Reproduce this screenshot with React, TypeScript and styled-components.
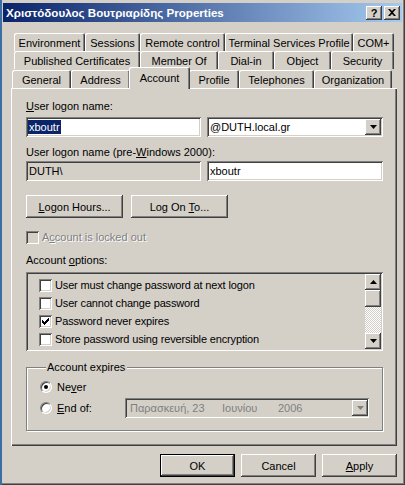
import React from 'react';
import styled, { createGlobalStyle, css } from 'styled-components';

const face = '#d4d0c8';
const shadow = '#808080';
const dark = '#404040';

const raised = css`
  box-shadow: inset -1px -1px ${dark}, inset 1px 1px #fff, inset -2px -2px ${shadow}, inset 2px 2px ${face};
`;

const sunken = css`
  box-shadow: inset 1px 1px ${shadow}, inset -1px -1px #fff, inset 2px 2px ${dark}, inset -2px -2px ${face};
`;

const GlobalStyle = createGlobalStyle`
  body {
    margin: 0;
    background: ${face};
    font-family: "Liberation Sans", Arial, sans-serif;
    font-size: 11px;
    color: #000;
  }
  * { box-sizing: border-box; }
`;

const Window = styled.div`
  width: 405px;
  height: 485px;
  display: flex;
  flex-direction: column;
  background: ${face};
  border-left: 2px solid #3a6ea5;
  padding: 3px 3px 0 1px;
  box-shadow: inset -1px -1px ${dark}, inset -2px -2px ${shadow}, inset 1px 1px ${face};
`;

const TitleBar = styled.div`
  height: 19px;
  display: flex;
  align-items: center;
  padding: 0 2px 0 3px;
  background: linear-gradient(to right, #0a246a, #a6caf0);
  color: #fff;
  font-weight: bold;
  font-size: 11.6px;
  white-space: nowrap;
`;

const TitleButtons = styled.div`
  margin-left: auto;
  display: flex;
  gap: 2px;
`;

const TitleButton = styled.div`
  width: 16px;
  height: 14px;
  display: flex;
  align-items: center;
  justify-content: center;
  background: ${face};
  color: #000;
  font-size: 11px;
  font-weight: bold;
  ${raised}
`;

const Body = styled.div`
  flex: 1;
  display: flex;
  flex-direction: column;
  padding: 11px 5px 0 8px;
`;

const TabRow = styled.div<{ $indent: number; $h: number }>`
  display: flex;
  align-items: flex-end;
  height: ${(p) => p.$h}px;
  padding-left: ${(p) => p.$indent}px;
`;

const Tab = styled.div<{ $w: number; $active?: boolean }>`
  position: relative;
  width: ${(p) => p.$w}px;
  height: ${(p) => (p.$active ? 22 : 18)}px;
  margin: ${(p) => (p.$active ? '0 -1px -1px -1px' : '0')};
  z-index: ${(p) => (p.$active ? 1 : 0)};
  display: flex;
  align-items: center;
  justify-content: center;
  padding-top: ${(p) => (p.$active ? 0 : 2)}px;
  background: ${face};
  border-radius: 2px 2px 0 0;
  box-shadow: inset 1px 1px #fff, inset -1px 0 ${dark}, inset -2px 0 ${shadow};
  white-space: nowrap;
`;

const Panel = styled.div`
  height: 358px;
  display: flex;
  flex-direction: column;
  padding: 12px 14px 0 15px;
  box-shadow: inset 1px 1px #fff, inset -1px -1px ${dark}, inset -2px -2px ${shadow};
`;

const Label = styled.div<{ $gap?: number; $disabled?: boolean }>`
  height: 13px;
  line-height: 13px;
  margin-top: ${(p) => p.$gap ?? 0}px;
  white-space: nowrap;
  color: ${(p) => (p.$disabled ? shadow : '#000')};
  text-shadow: ${(p) => (p.$disabled ? '1px 1px #fff' : 'none')};
`;

const FieldRow = styled.div<{ $gap: number }>`
  display: flex;
  gap: 6px;
  margin-top: ${(p) => p.$gap}px;
`;

const TextBox = styled.div<{ $w: number; $disabled?: boolean }>`
  width: ${(p) => p.$w}px;
  height: 20px;
  display: flex;
  align-items: center;
  padding: 0 3px;
  background: ${(p) => (p.$disabled ? face : '#fff')};
  ${sunken}
`;

const Selected = styled.span`
  background: #0a246a;
  color: #fff;
  line-height: 14px;
  padding: 0 1px;
  margin-left: -1px;
`;

const ComboText = styled.span`
  flex: 1;
`;

const DropButton = styled.div<{ $disabled?: boolean }>`
  width: 16px;
  height: 16px;
  margin-right: -1px;
  display: flex;
  align-items: center;
  justify-content: center;
  background: ${face};
  color: ${(p) => (p.$disabled ? shadow : '#000')};
  ${raised}
`;

const ButtonRow = styled.div<{ $gap: number; $end?: boolean }>`
  display: flex;
  gap: ${(p) => (p.$end ? 6 : 8)}px;
  justify-content: ${(p) => (p.$end ? 'flex-end' : 'flex-start')};
  margin-top: ${(p) => p.$gap}px;
`;

const Button = styled.div<{ $w: number; $default?: boolean }>`
  width: ${(p) => p.$w}px;
  height: 23px;
  display: flex;
  align-items: center;
  justify-content: center;
  background: ${face};
  ${raised}
  ${(p) =>
    p.$default &&
    css`
      border: 1px solid #000;
    `}
`;

const CheckRow = styled.div<{ $gap?: number; $h?: number }>`
  display: flex;
  align-items: center;
  gap: 2px;
  height: ${(p) => p.$h ?? 13}px;
  margin-top: ${(p) => p.$gap ?? 0}px;
  white-space: nowrap;
`;

const Box = styled.div<{ $disabled?: boolean }>`
  width: 13px;
  height: 13px;
  flex: none;
  display: flex;
  align-items: center;
  justify-content: center;
  margin-right: 1px;
  background: ${(p) => (p.$disabled ? face : '#fff')};
  ${sunken}
`;

const ListBox = styled.div`
  height: 79px;
  margin-top: 5px;
  display: flex;
  padding: 2px;
  background: ${face};
  ${sunken}
`;

const Items = styled.div`
  flex: 1;
  padding: 2px 0 0 11px;
  letter-spacing: -0.15px;
`;

const ScrollBar = styled.div`
  width: 16px;
  display: flex;
  flex-direction: column;
`;

const ScrollButton = styled.div<{ $h: number }>`
  height: ${(p) => p.$h}px;
  display: flex;
  align-items: center;
  justify-content: center;
  background: ${face};
  ${raised}
`;

const Track = styled.div`
  flex: 1;
  background-color: ${face};
  background-image: linear-gradient(45deg, #fff 25%, transparent 25%, transparent 75%, #fff 75%),
    linear-gradient(45deg, #fff 25%, transparent 25%, transparent 75%, #fff 75%);
  background-size: 2px 2px;
  background-position: 0 0, 1px 1px;
`;

const Group = styled.fieldset`
  margin: 10px 0 0 0;
  padding: 0 0 12px 13px;
  height: 70px;
  border: 1px solid ${shadow};
  box-shadow: inset 1px 1px #fff, 1px 1px #fff;
`;

const Legend = styled.legend`
  margin-left: 6px;
  padding: 0 2px 0 1px;
  line-height: 13px;
  background: ${face};
`;

const RadioRow = styled.div<{ $h: number; $gap: number }>`
  display: flex;
  align-items: center;
  height: ${(p) => p.$h}px;
  margin-top: ${(p) => p.$gap}px;
`;

const Radio = styled.div<{ $on?: boolean }>`
  width: 12px;
  height: 12px;
  flex: none;
  border-radius: 50%;
  background: #fff;
  border: 1px solid;
  border-color: ${shadow} #fff #fff ${shadow};
  box-shadow: inset 1px 1px ${dark}, inset -1px -1px ${face};
  display: flex;
  align-items: center;
  justify-content: center;
  margin-right: 5px;
  &::after {
    content: '';
    display: ${(p) => (p.$on ? 'block' : 'none')};
    width: 4px;
    height: 4px;
    border-radius: 50%;
    background: #000;
  }
`;

const RadioLabel = styled.span<{ $w?: number }>`
  width: ${(p) => (p.$w ? `${p.$w}px` : 'auto')};
`;

const DatePicker = styled.div`
  width: 244px;
  height: 20px;
  display: flex;
  align-items: center;
  padding: 0 2px 0 5px;
  background: ${face};
  color: ${shadow};
  ${sunken}
`;

const DatePart = styled.span<{ $w?: number }>`
  width: ${(p) => (p.$w ? `${p.$w}px` : 'auto')};
  flex: ${(p) => (p.$w ? 'none' : 1)};
`;

const Arrow = ({ up }: { up?: boolean }) => (
  <svg width="7" height="4" viewBox="0 0 7 4">
    <path d={up ? 'M3.5 0 L7 4 L0 4 Z' : 'M0 0 L7 0 L3.5 4 Z'} fill="currentColor" />
  </svg>
);

const Check = () => (
  <svg width="7" height="7" viewBox="0 0 7 7">
    <path d="M0 2h1v1h1v1h1V3h1V2h1V1h1V0h1v3H6v1H5v1H4v1H3v1H2V6H1V5H0z" fill="#000" />
  </svg>
);

const tabRows = [
  { indent: 3, h: 18, tabs: [['Environment', 71], ['Sessions', 55], ['Remote control', 85], ['Terminal Services Profile', 128], ['COM+', 41]] },
  { indent: 3, h: 18, tabs: [['Published Certificates', 126], ['Member Of', 78], ['Dial-in', 56], ['Object', 57], ['Security', 63]] },
  { indent: 1, h: 19, tabs: [['General', 59], ['Address', 59], ['Account', 61], ['Profile', 50], ['Telephones', 75], ['Organization', 78]] },
] as const;

const options = [
  { label: 'User must change password at next logon', on: false },
  { label: 'User cannot change password', on: false },
  { label: 'Password never expires', on: true },
  { label: 'Store password using reversible encryption', on: false },
];

export default function App() {
  return (
    <>
      <GlobalStyle />
      <Window>
        <TitleBar>
          Χριστόδουλος Βουτριαρίδης Properties
          <TitleButtons>
            <TitleButton>?</TitleButton>
            <TitleButton>
              <svg width="8" height="7" viewBox="0 0 8 7">
                <path d="M0 0h2l2 2 2-2h2L5 3.5 8 7H6L4 5 2 7H0l3-3.5z" fill="#000" />
              </svg>
            </TitleButton>
          </TitleButtons>
        </TitleBar>
        <Body>
          {tabRows.map((row, i) => (
            <TabRow key={i} $indent={row.indent} $h={row.h}>
              {row.tabs.map(([name, w]) => (
                <Tab key={name} $w={w} $active={name === 'Account'}>
                  {name}
                </Tab>
              ))}
            </TabRow>
          ))}
          <Panel>
            <Label>
              <u>U</u>ser logon name:
            </Label>
            <FieldRow $gap={4}>
              <TextBox $w={175}>
                <Selected>xboutr</Selected>
              </TextBox>
              <TextBox $w={176}>
                <ComboText>@DUTH.local.gr</ComboText>
                <DropButton>
                  <Arrow />
                </DropButton>
              </TextBox>
            </FieldRow>
            <Label $gap={9}>
              User logon name (pre-<u>W</u>indows 2000):
            </Label>
            <FieldRow $gap={2}>
              <TextBox $w={175} $disabled>
                DUTH\
              </TextBox>
              <TextBox $w={176}>xboutr</TextBox>
            </FieldRow>
            <ButtonRow $gap={14}>
              <Button $w={97}>
                <span>
                  <u>L</u>ogon Hours...
                </span>
              </Button>
              <Button $w={97}>
                <span>
                  Log On <u>T</u>o...
                </span>
              </Button>
            </ButtonRow>
            <CheckRow $gap={13}>
              <Box $disabled />
              <Label $disabled>
                A<u>c</u>count is locked out
              </Label>
            </CheckRow>
            <Label $gap={10}>
              Account <u>o</u>ptions:
            </Label>
            <ListBox>
              <Items>
                {options.map((o) => (
                  <CheckRow key={o.label} $h={18}>
                    <Box>{o.on && <Check />}</Box>
                    {o.label}
                  </CheckRow>
                ))}
              </Items>
              <ScrollBar>
                <ScrollButton $h={16}>
                  <Arrow up />
                </ScrollButton>
                <ScrollButton $h={17} />
                <Track />
                <ScrollButton $h={16}>
                  <Arrow />
                </ScrollButton>
              </ScrollBar>
            </ListBox>
            <Group>
              <Legend>Account expires</Legend>
              <RadioRow $h={18} $gap={4}>
                <Radio $on />
                <RadioLabel>
                  Ne<u>v</u>er
                </RadioLabel>
              </RadioRow>
              <RadioRow $h={20} $gap={2}>
                <Radio />
                <RadioLabel $w={68}>
                  <u>E</u>nd of:
                </RadioLabel>
                <DatePicker>
                  <DatePart $w={92}>Παρασκευή, 23</DatePart>
                  <DatePart $w={56}>Ιουνίου</DatePart>
                  <DatePart>2006</DatePart>
                  <DropButton $disabled>
                    <Arrow />
                  </DropButton>
                </DatePicker>
              </RadioRow>
            </Group>
          </Panel>
          <ButtonRow $gap={8} $end>
            <Button $w={75} $default>
              OK
            </Button>
            <Button $w={75}>Cancel</Button>
            <Button $w={75}>
              <span>
                <u>A</u>pply
              </span>
            </Button>
          </ButtonRow>
        </Body>
      </Window>
    </>
  );
}
